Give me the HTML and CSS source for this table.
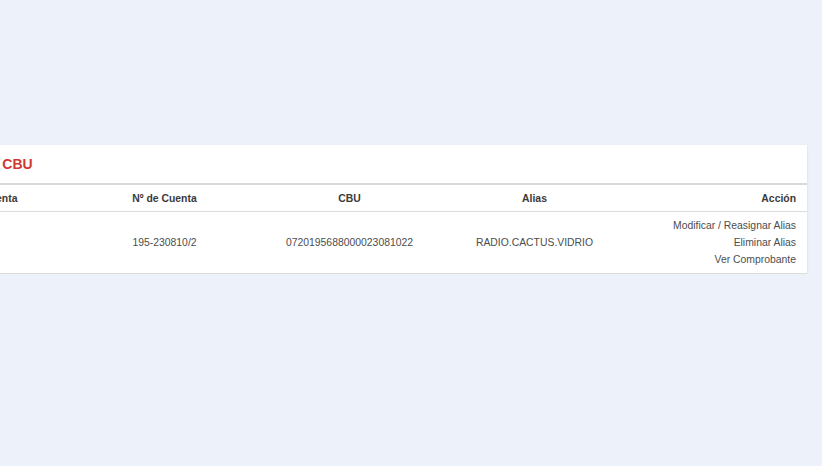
FILE: index.html
```html
<!DOCTYPE html>
<html lang="es">
<head>
    <meta charset="UTF-8">
    <title>Alias CBU</title>
    <link rel="stylesheet" href="styles.css">
</head>
<body>
    <div class="page">
        <div class="card">
            <h2 class="card-title">Alias CBU</h2>
            <table class="alias-table">
                <colgroup>
                    <col class="col-tipo">
                    <col class="col-cuenta">
                    <col class="col-cbu">
                    <col class="col-alias">
                    <col class="col-accion">
                </colgroup>
                <thead>
                    <tr>
                        <th>Tipo de Cuenta</th>
                        <th>Nº de Cuenta</th>
                        <th>CBU</th>
                        <th>Alias</th>
                        <th class="accion">Acción</th>
                    </tr>
                </thead>
                <tbody>
                    <tr>
                        <td>CC $</td>
                        <td>195-230810/2</td>
                        <td>0720195688000023081022</td>
                        <td>RADIO.CACTUS.VIDRIO</td>
                        <td class="accion">
                            <a href="#">Modificar / Reasignar Alias</a>
                            <a href="#">Eliminar Alias</a>
                            <a href="#">Ver Comprobante</a>
                        </td>
                    </tr>
                </tbody>
            </table>
        </div>
    </div>
</body>
</html>
```

FILE: styles.css
```css
/* Общие стили */
body {
    margin: 0;
    background-color: #edf1f9;
    font-family: 'Liberation Sans', Arial, sans-serif;
    color: #4a4a4a;
    overflow: hidden;
}

.page {
    padding-top: 145px;
}

.card {
    margin-left: -112px;
    width: 919px;
    background-color: #fff;
    box-shadow: 0 1px 2px rgba(0, 0, 0, 0.12);
}

.card-title {
    margin: 0;
    padding-left: 77px;
    font-size: 14px;
    line-height: 38px;
    font-weight: 700;
    color: #cf3a32;
}

/* Таблица */
.alias-table {
    width: 100%;
    border-collapse: collapse;
    table-layout: fixed;
    font-size: 10.4px;
}

.col-tipo { width: 184px; }
.col-cuenta { width: 185px; }
.col-cbu { width: 185px; }
.col-alias { width: 185px; }
.col-accion { width: 180px; }

.alias-table th {
    border-top: 2px solid #d9d9d9;
    border-bottom: 1px solid #dcdcdc;
    height: 26px;
    padding: 0 11px;
    font-weight: 700;
    color: #3a3a3a;
    text-align: center;
}

.alias-table td {
    border-bottom: 1px solid #dcdcdc;
    padding: 5px 11px 5px;
    height: 51px;
    text-align: center;
    color: #4d4d4d;
}

.alias-table .accion {
    text-align: right;
}

.alias-table td.accion a {
    display: block;
    line-height: 17px;
    color: #4d4d4d;
    text-decoration: none;
}
```
